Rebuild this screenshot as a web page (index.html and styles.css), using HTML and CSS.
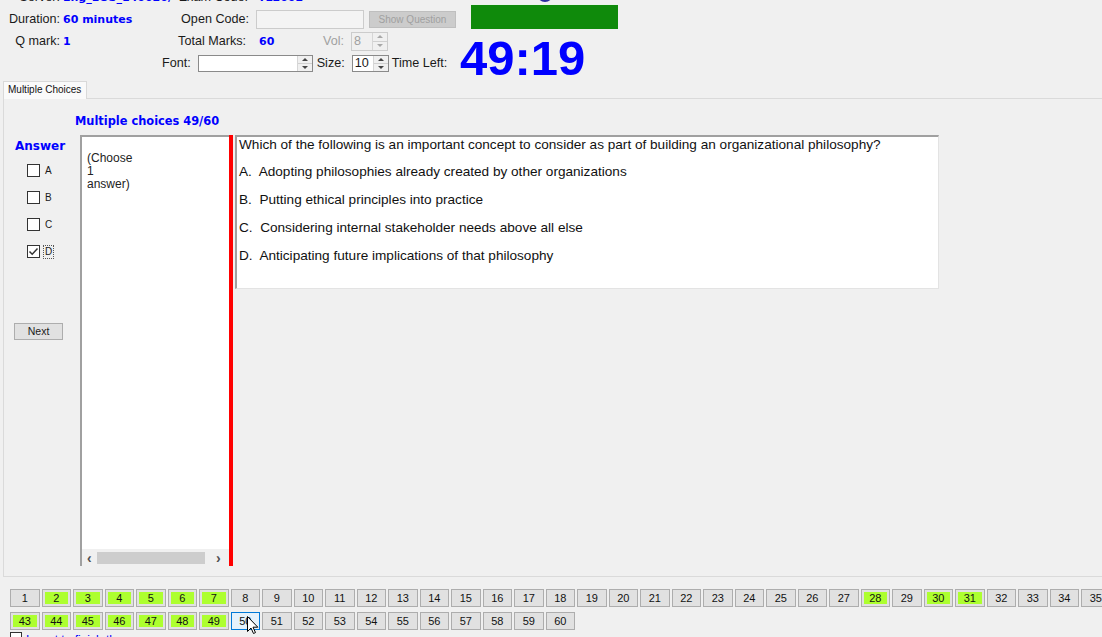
FILE: index.html
```html
<!DOCTYPE html>
<html>
<head>
<meta charset="utf-8">
<link rel="stylesheet" href="styles.css">
</head>
<body>
<div class="header">
  <div class="hdr-left">
    <div class="hrow">
      <span class="c1">Server:</span>
      <span class="c2 val">Eng_EOS_140020/</span>
      <span class="c3 exam">Exam Code:</span>
      <span class="val v-exam">TL2002</span>
    </div>
    <div class="hrow">
      <span class="c1 dur">Duration:</span>
      <span class="c2 val">60 minutes</span>
      <span class="c3">Open Code:</span>
      <span class="textbox dis"></span>
      <span class="btn-dis">Show Question</span>
    </div>
    <div class="hrow">
      <span class="c1">Q mark:</span>
      <span class="c2 val">1</span>
      <span class="c3 tm">Total Marks:</span>
      <span class="val v-total">60</span>
      <span class="vol-lbl">Vol:</span>
      <span class="spin spin-dis"><span class="spin-text">8</span><span class="spin-arrows"><span class="ar up"></span><span class="ar down"></span></span></span>
    </div>
    <div class="hrow row4">
      <span>Font:</span>
      <span class="spin combo"><span class="spin-text"></span><span class="spin-arrows"><span class="ar up"></span><span class="ar down"></span></span></span>
      <span class="size-lbl">Size:</span>
      <span class="spin size"><span class="spin-text">10</span><span class="spin-arrows"><span class="ar up"></span><span class="ar down"></span></span></span>
      <span class="tl-lbl">Time Left:</span>
    </div>
  </div>
  <div class="hdr-right">
    <div class="logo-dot"></div>
    <div class="greenbar"></div>
    <div class="timer">49:19</div>
  </div>
</div>

<div class="tabs">
  <div class="tab">Multiple Choices</div>
</div>
<div class="panel">
  <div class="title">Multiple choices 49/60</div>
  <div class="content">
    <div class="answers">
      <div class="ans-title">Answer</div>
      <div class="opt"><span class="cb"></span><span class="opt-l">A</span></div>
      <div class="opt"><span class="cb"></span><span class="opt-l">B</span></div>
      <div class="opt"><span class="cb"></span><span class="opt-l">C</span></div>
      <div class="opt"><span class="cb"><svg width="11" height="11" viewBox="0 0 11 11"><path d="M1.5 5.5 L4.2 8.2 L9.5 2.5" fill="none" stroke="#333" stroke-width="1.5"/></svg></span><span class="opt-l focus">D</span></div>
      <div class="next">Next</div>
    </div>
    <div class="choose">
      <div class="choose-text">(Choose<br>1<br>answer)</div>
      <div class="hscroll">
        <span class="sarr">&lsaquo;</span>
        <span class="thumb"></span>
        <span class="sarr right">&rsaquo;</span>
      </div>
    </div>
    <div class="redbar"></div>
    <div class="question">
      <div class="qline">Which of the following is an important concept to consider as part of building an organizational philosophy?</div>
      <div class="qline">A.&nbsp; Adopting philosophies already created by other organizations</div>
      <div class="qline">B.&nbsp; Putting ethical principles into practice</div>
      <div class="qline">C.&nbsp; Considering internal stakeholder needs above all else</div>
      <div class="qline">D.&nbsp; Anticipating future implications of that philosophy</div>
    </div>
  </div>
</div>

<div class="nav">
  <div class="nrow">
    <span class="nb">1</span><span class="nb g">2</span><span class="nb g">3</span><span class="nb g">4</span><span class="nb g">5</span><span class="nb g">6</span><span class="nb g">7</span><span class="nb">8</span><span class="nb">9</span><span class="nb">10</span><span class="nb">11</span><span class="nb">12</span><span class="nb">13</span><span class="nb">14</span><span class="nb">15</span><span class="nb">16</span><span class="nb">17</span><span class="nb">18</span><span class="nb">19</span><span class="nb">20</span><span class="nb">21</span><span class="nb">22</span><span class="nb">23</span><span class="nb">24</span><span class="nb">25</span><span class="nb">26</span><span class="nb">27</span><span class="nb g">28</span><span class="nb">29</span><span class="nb g">30</span><span class="nb g">31</span><span class="nb">32</span><span class="nb">33</span><span class="nb">34</span><span class="nb">35</span><span class="nb">36</span><span class="nb">37</span><span class="nb">38</span><span class="nb">39</span><span class="nb">40</span><span class="nb">41</span><span class="nb">42</span>
  </div>
  <div class="nrow">
    <span class="nb g">43</span><span class="nb g">44</span><span class="nb g">45</span><span class="nb g">46</span><span class="nb g">47</span><span class="nb g">48</span><span class="nb g">49</span><span class="nb cur">50<svg class="cursor" width="12" height="19" viewBox="0 0 12 19"><path d="M0.5 0.5 L0.5 15.5 L4 12 L6.5 17.5 L8.5 16.6 L6 11.2 L10.8 11.2 Z" fill="#fff" stroke="#000" stroke-width="1"/></svg></span><span class="nb">51</span><span class="nb">52</span><span class="nb">53</span><span class="nb">54</span><span class="nb">55</span><span class="nb">56</span><span class="nb">57</span><span class="nb">58</span><span class="nb">59</span><span class="nb">60</span>
  </div>
  <div class="finish"><span class="cb small"></span><span class="finish-text">I want to finish the exam</span></div>
</div>
</body>
</html>
```
FILE: styles.css
```css
* { box-sizing: border-box; }
html, body {
  margin: 0;
  padding: 0;
  width: 1102px;
  height: 637px;
  overflow: hidden;
  background: #f0f0f0;
  font-family: "Liberation Sans", Arial, sans-serif;
  font-size: 12.6px;
  color: #1a1a1a;
}

/* header */
.header {
  display: flex;
  align-items: flex-start;
  margin-top: -14px;
  height: 88px;
}
.hdr-left { width: 460px; flex: none; }
.hrow {
  display: flex;
  align-items: center;
  height: 22px;
  white-space: nowrap;
}
.c1 { width: 60px; text-align: right; flex: none; }
.c2 { width: 118px; padding-left: 3px; flex: none; }
.c3 { width: 71px; text-align: right; flex: none; }
.c3.exam { padding-right: 1px; }
.c3.tm { padding-right: 3px; }
.val {
  font-family: "DejaVu Sans", Verdana, sans-serif;
  font-weight: bold;
  font-size: 11px;
  color: #0000ff;
}
.v-exam { margin-left: 9px; }
.v-total { margin-left: 10px; width: 14px; }
.textbox {
  margin-left: 7px;
  width: 108px;
  height: 19px;
  border: 1px solid #cccccc;
  background: #f4f4f4;
}
.btn-dis {
  margin-left: 5px;
  width: 87px;
  height: 17px;
  background: #cccccc;
  border: 1px solid #bfbfbf;
  color: #a0a0a0;
  font-size: 10px;
  text-align: center;
  line-height: 15px;
}
.vol-lbl { margin-left: 50px; color: #a0a0a0; width: 28px; }
.spin {
  display: flex;
  border: 1px solid #8a8a8a;
  background: #fff;
  height: 17px;
  width: 37px;
}
.spin-dis { height: 19px; border-color: #cccccc; background: #f0f0f0; color: #a0a0a0; }
.spin-text { flex: 1; padding-left: 2px; line-height: 15px; font-size: 12.6px; }
.spin-dis .spin-text { line-height: 17px; }
.spin-arrows {
  width: 15px;
  flex: none;
  display: flex;
  flex-direction: column;
  border-left: 1px solid #d6d6d6;
}
.ar {
  flex: 1;
  display: flex;
  align-items: center;
  justify-content: center;
  background: #f0f0f0;
}
.ar.up { border-bottom: 1px solid #d0d0d0; }
.ar::before {
  content: "";
  border-left: 3px solid transparent;
  border-right: 3px solid transparent;
}
.ar.up::before { border-bottom: 3px solid #444; }
.ar.down::before { border-top: 3px solid #444; }
.spin-dis .ar.up::before { border-bottom-color: #a8a8a8; }
.spin-dis .ar.down::before { border-top-color: #a8a8a8; }
.row4 { padding-left: 162px; }
.combo { margin-left: 7px; width: 115px; }
.size-lbl { margin-left: 4px; }
.size { margin-left: 7px; }
.tl-lbl { margin-left: 3px; }

.hdr-right { flex: none; width: 200px; }
.logo-dot {
  margin-left: 77px;
  width: 16px;
  height: 16px;
  border-radius: 50%;
  background: #2b2ba0;
}
.greenbar {
  margin-left: 11px;
  margin-top: 2px;
  width: 147px;
  height: 25px;
  background: #0f8a0b;
  border-top: 1px solid #eaf4ea;
}
.timer {
  margin-top: 5px;
  font-family: "Liberation Sans", Arial, sans-serif;
  font-weight: bold;
  font-size: 49px;
  line-height: 49px;
  color: #0000ff;
}

/* tabs & panel */
.tabs {
  display: flex;
  padding-left: 3px;
  margin-top: 7px;
  height: 17px;
}
.tab {
  height: 18px;
  border: 1px solid #d9d9d9;
  border-bottom: none;
  background: #fafafa;
  padding: 0 5px 0 4px;
  font-size: 10px;
  line-height: 16px;
  color: #111;
  position: relative;
  z-index: 1;
}
.panel {
  margin-left: 3px;
  width: 1110px;
  height: 479px;
  border: 1px solid #dadada;
  background: #f0f0f0;
}
.title {
  margin-top: 14px;
  padding-left: 71px;
  height: 16px;
  line-height: 16px;
  font-family: "DejaVu Sans", Verdana, sans-serif;
  font-weight: bold;
  font-size: 11.4px;
  color: #0000ff;
}
.content {
  margin-top: 6px;
  display: flex;
  align-items: flex-start;
  height: 431px;
}
.answers { width: 76px; flex: none; }
.ans-title {
  padding-left: 11px;
  margin-top: 3px;
  height: 16px;
  line-height: 16px;
  font-family: "DejaVu Sans", Verdana, sans-serif;
  font-weight: bold;
  font-size: 12px;
  color: #0000ff;
}
.opt {
  display: flex;
  align-items: center;
  height: 27px;
  padding-left: 23px;
}
.ans-title + .opt { margin-top: 3px; }
.cb {
  width: 13px;
  height: 13px;
  border: 1px solid #333;
  background: #fff;
  flex: none;
  display: flex;
  align-items: center;
  justify-content: center;
}
.opt-l {
  margin-left: 3px;
  font-size: 10px;
  line-height: 12px;
  padding: 0 1px;
  border: 1px solid transparent;
}
.opt-l.focus { border: 1px dotted #555; }
.next {
  margin-top: 58px;
  margin-left: 10px;
  width: 49px;
  height: 17px;
  border: 1px solid #adadad;
  background: #e1e1e1;
  font-size: 10.5px;
  line-height: 15px;
  text-align: center;
}
.choose {
  width: 149px;
  height: 431px;
  flex: none;
  display: flex;
  flex-direction: column;
  background: #fff;
  border-left: 2px solid #a0a0a0;
  border-top: 2px solid #a0a0a0;
}
.choose-text {
  flex: 1;
  padding: 15px 0 0 5px;
  font-size: 12px;
  line-height: 13px;
  color: #222;
}
.hscroll {
  height: 17px;
  display: flex;
  align-items: center;
  background: #f0f0f0;
  padding: 0 4px 0 5px;
}
.sarr {
  width: 9px;
  font-size: 14px;
  line-height: 14px;
  color: #505050;
  font-weight: bold;
}
.sarr.right { margin-left: auto; }
.thumb {
  margin-left: 1px;
  width: 108px;
  height: 12px;
  background: #cdcdcd;
}
.redbar {
  width: 4px;
  height: 431px;
  flex: none;
  background: #ff0000;
}
.question {
  margin-left: 2px;
  width: 704px;
  height: 154px;
  flex: none;
  background: #fff;
  border-left: 2px solid #a0a0a0;
  border-top: 2px solid #a0a0a0;
  border-right: 1px solid #e3e3e3;
  border-bottom: 1px solid #e3e3e3;
  padding: 0 0 0 2px;
  font-size: 13.6px;
  color: #111;
}
.qline {
  height: 16px;
  line-height: 16px;
  margin-bottom: 12px;
  white-space: nowrap;
}
.qline:first-child { margin-bottom: 11px; }

/* navigation */
.nav {
  margin-top: 12px;
  padding-left: 10px;
}
.nrow {
  display: flex;
  gap: 2px;
  height: 18px;
}
.nrow + .nrow { margin-top: 5px; }
.nb {
  flex: none;
  width: 29.5px;
  height: 18px;
  border: 1px solid #adadad;
  background: #e1e1e1;
  font-size: 11px;
  line-height: 16px;
  text-align: center;
  color: #111;
}
.nb.g {
  background: #adff2f;
  box-shadow: inset 0 0 0 2px #e1e1e1;
}
.nb.cur {
  border-color: #0078d7;
  background: #e5f1fb;
  position: relative;
}
.cursor {
  position: absolute;
  left: 15px;
  top: 3px;
}
.finish {
  display: flex;
  align-items: flex-start;
  margin-top: 2px;
}
.cb.small { width: 12px; height: 12px; }
.finish-text {
  margin-left: 4px;
  margin-top: 1px;
  font-size: 12px;
  line-height: 14px;
  color: #0000ff;
}
```
